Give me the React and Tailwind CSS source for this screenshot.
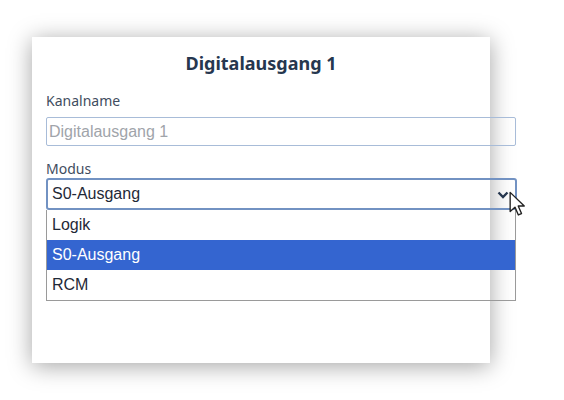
export default function App() {
  return (
    <div className="w-[564px] h-[400px] bg-white pt-[37px] pl-[32px]" style={{ fontFamily: '"Liberation Sans", Arial, sans-serif' }}>
      <div className="w-[458px] h-[326px] bg-white shadow-[0_3px_22px_rgba(0,0,0,0.36)] px-[14px] pt-[14px]">
        <h2 className="text-center text-[18px] font-bold text-[#26374f] leading-[24px]" style={{ fontFamily: '"Noto Sans", sans-serif' }}>
          Digitalausgang 1
        </h2>

        <label className="block mt-[17px] text-[14px] text-[#3f4d60] leading-[18px]" style={{ fontFamily: '"Noto Sans", sans-serif' }}>
          Kanalname
        </label>
        <div className="mt-[7px] h-[29px] w-[470px] border border-[#a8bcd8] rounded-[2px] flex items-center px-[2px] text-[16px] text-[#a0a4aa]">
          Digitalausgang 1
        </div>

        <label className="block mt-[14px] text-[14px] text-[#3f4d60] leading-[18px]" style={{ fontFamily: '"Noto Sans", sans-serif' }}>
          Modus
        </label>
        <div className="relative mt-[0px] w-[471px]">
          <div className="h-[32px] border-2 border-[#7292c2] rounded-[3px] flex items-center justify-between pl-[4px] pr-[6px] text-[16px] text-[#1f2937]">
            <span>S0-Ausgang</span>
            <svg width="12" height="8" viewBox="0 0 12 8" className="mt-[1px]">
              <path d="M1.5 1.5 L6 6 L10.5 1.5" fill="none" stroke="#26374f" strokeWidth="2.4" />
            </svg>
          </div>
          <div className="w-[470px] border border-[#9a9a9a] border-t-0 text-[16px] text-[#1f2937]">
            <div className="h-[30px] flex items-center pl-[5px]">Logik</div>
            <div className="h-[30px] flex items-center pl-[5px] bg-[#3465d0] text-white">S0-Ausgang</div>
            <div className="h-[30px] flex items-center pl-[5px]">RCM</div>
          </div>
          <svg width="18" height="26" viewBox="0 0 12 19" className="absolute left-[462px] top-[13px]">
            <path d="M1 1 L1 15 L4.5 11.8 L7 17.5 L9.3 16.5 L6.9 11 L11.3 11 Z" fill="white" stroke="#222" strokeWidth="1" strokeLinejoin="round" />
          </svg>
        </div>
      </div>
    </div>
  );
}
